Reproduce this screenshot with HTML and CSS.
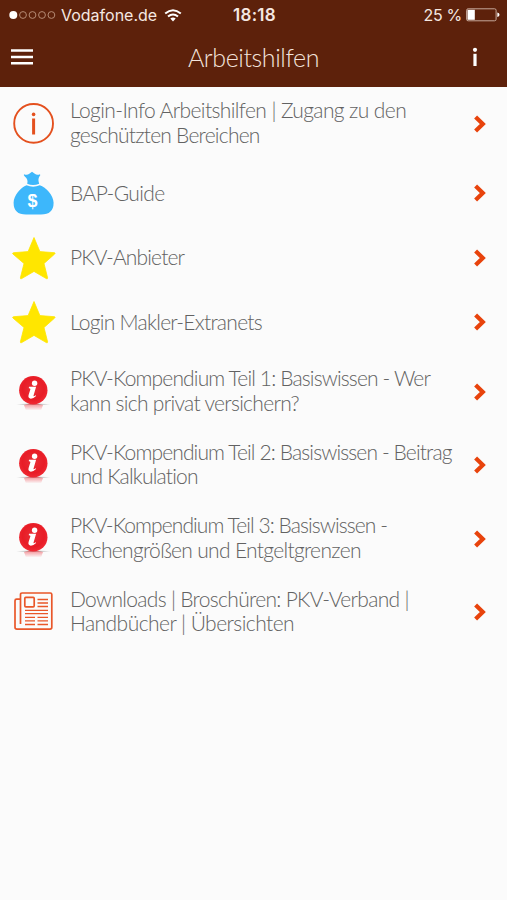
FILE: index.html
```html
<!DOCTYPE html>
<html lang="de">
<head>
<meta charset="utf-8">
<title>Arbeitshilfen</title>
<link rel="stylesheet" href="styles.css">
</head>
<body>
<svg class="defs" width="0" height="0" aria-hidden="true">
  <defs>
    <radialGradient id="ball" cx="50%" cy="45%" r="55%"><stop offset="0" stop-color="#e83038"/><stop offset=".7" stop-color="#e81c26"/><stop offset="1" stop-color="#f02a34"/></radialGradient>
    <linearGradient id="reflect" x1="0" y1="0" x2="0" y2="1"><stop offset="0" stop-color="#f05058" stop-opacity=".65"/><stop offset="1" stop-color="#f05058" stop-opacity="0"/></linearGradient>
    <radialGradient id="floor"><stop offset="0" stop-color="#777"/><stop offset="1" stop-color="#999" stop-opacity="0"/></radialGradient>
    <symbol id="star" viewBox="0 0 44 44"><path d="M22 1.5 27.9 15.6 42.5 16.7Q43.7 17 42.7 18L32 27.5 35.6 41.8Q35.6 43.3 34.3 42.6L22 35.4 9.7 42.6Q8.2 43.3 8.4 41.8L12 27.5.9 18Q.2 17 1.5 16.7L16.1 15.6Z" fill="#ffe600" stroke="#ffe600" stroke-width=".8" stroke-linejoin="round"/></symbol>
    <symbol id="redinfo" viewBox="0 -3 44 44">
      <ellipse cx="21.4" cy="31.2" rx="18" ry="1" fill="url(#floor)"/>
      <path d="M12 32Q21.4 29 31 32L29 37.5H14Z" fill="url(#reflect)"/>
      <circle cx="21.3" cy="17.2" r="14.2" fill="url(#ball)"/>
      <circle cx="22.6" cy="10.2" r="2.7" fill="#fff"/>
      <path d="M17 13.8H24.1L21.5 22.7Q21.2 23.8 23.8 22.2L24.1 23Q21 26 18.2 25.6 15.8 24.9 16.6 22L18.4 16.2Q18.5 15.2 16.8 15.2Z" fill="#fff"/>
    </symbol>
    <symbol id="chevron" viewBox="0 0 12 18"><path d="M1.6 2 8.8 9 1.6 16" fill="none" stroke="#e8430c" stroke-width="4.2"/></symbol>
  </defs>
</svg>
<header class="header">
  <div class="status">
    <div class="carrier">
      <svg width="47" height="10" viewBox="0 0 47 10"><circle cx="4.3" cy="5" r="4" fill="#fff"/><g fill="none" stroke="#b58a74" stroke-width="1"><circle cx="14" cy="5" r="3.4"/><circle cx="23.5" cy="5" r="3.4"/><circle cx="33" cy="5" r="3.4"/><circle cx="42.4" cy="5" r="3.4"/></g></svg>
      <span class="operator">Vodafone.de</span>
      <svg class="wifi" width="18" height="13" viewBox="0 0 18 13"><g fill="none" stroke="#fff" stroke-width="2"><path d="M1.2 4.6Q9-2.2 16.8 4.6"/><path d="M4 7.6Q9 3.3 14 7.6"/></g><path d="M6.3 9.6Q9 7.5 11.7 9.6L9 12.4Z" fill="#fff"/></svg>
    </div>
    <span class="time">18:18</span>
    <div class="power">
      <span class="percent">25 %</span>
      <svg width="34" height="14" viewBox="0 0 34 14"><rect x=".6" y=".8" width="29.5" height="12" rx="1.5" fill="none" stroke="#c6a89a"/><rect x="1.5" y="1.8" width="7.3" height="10" fill="#fff"/><path d="M31.3 4.5Q33.5 5 33.5 6.8T31.3 9Z" fill="#fff"/></svg>
    </div>
  </div>
  <nav class="nav">
    <svg width="22" height="16" viewBox="0 0 22 16"><path d="M0 1.5H22M0 8H22M0 14.2H22" stroke="#fff" stroke-width="2.4"/></svg>
    <h1 class="title">Arbeitshilfen</h1>
    <svg class="about" width="6" height="20" viewBox="0 0 6 20"><circle cx="3" cy="2.8" r="2.1" fill="#fff"/><path d="M3 6.8V19" stroke="#fff" stroke-width="3.2"/></svg>
  </nav>
</header>
<main class="list">
  <a class="row">
    <svg class="icon" viewBox="0 0 44 44"><circle cx="21.6" cy="21.4" r="19.4" fill="none" stroke="#e4501e" stroke-width="1.9"/><circle cx="21.6" cy="12.4" r="1.8" fill="#e4501e"/><path d="M21.6 16.5V32.5" stroke="#e4501e" stroke-width="3"/></svg>
    <div class="label"><span class="l1">Login-Info Arbeitshilfen | Zugang zu den</span><span class="l2">geschützten Bereichen</span></div>
    <svg class="chevron"><use href="#chevron"/></svg>
  </a>
  <a class="row single">
    <svg class="icon" viewBox="0 0 44 44"><g fill="#3db7fb"><path d="M12 3.2Q15 4.5 17.3 2.8L20 .8 22.8 2.8Q25 4.5 28 3.2 28.8 4 27.5 5.3 25.5 8.5 27.2 12.7 21 15.2 15.2 12.7 16.5 8.5 12.8 5.5 11.3 4.2 12 3.2Z"/><path d="M14.6 14.3Q21 17.2 27.8 14.3C34 16.5 41.6 24.3 41.6 31.8Q41.6 43.6 29 43.6H14Q1.6 43.6 1.6 31.8C1.6 24.3 9 16.5 14.6 14.3Z"/></g><text class="dollar" x="20.6" y="35.5">$</text></svg>
    <div class="label"><span class="l3">BAP-Guide</span></div>
    <svg class="chevron"><use href="#chevron"/></svg>
  </a>
  <a class="row single">
    <svg class="icon"><use href="#star"/></svg>
    <div class="label"><span class="l4">PKV-Anbieter</span></div>
    <svg class="chevron"><use href="#chevron"/></svg>
  </a>
  <a class="row single">
    <svg class="icon"><use href="#star"/></svg>
    <div class="label"><span class="l5">Login Makler-Extranets</span></div>
    <svg class="chevron"><use href="#chevron"/></svg>
  </a>
  <a class="row">
    <svg class="icon"><use href="#redinfo"/></svg>
    <div class="label"><span class="l6">PKV-Kompendium Teil 1: Basiswissen - Wer</span><span class="l7">kann sich privat versichern?</span></div>
    <svg class="chevron"><use href="#chevron"/></svg>
  </a>
  <a class="row">
    <svg class="icon"><use href="#redinfo"/></svg>
    <div class="label"><span class="l8">PKV-Kompendium Teil 2: Basiswissen - Beitrag</span><span class="l9">und Kalkulation</span></div>
    <svg class="chevron"><use href="#chevron"/></svg>
  </a>
  <a class="row">
    <svg class="icon"><use href="#redinfo"/></svg>
    <div class="label"><span class="l10">PKV-Kompendium Teil 3: Basiswissen -</span><span class="l11">Rechengrößen und Entgeltgrenzen</span></div>
    <svg class="chevron"><use href="#chevron"/></svg>
  </a>
  <a class="row">
    <svg class="icon" viewBox="0 0 44 44"><g fill="none" stroke="#e9572a" stroke-width="1.7"><path d="M8.5 34V4.6Q8.5 3 10 3H38.3Q39.8 3 39.8 4.6V37.2Q39.8 39.1 38 39.1H5Q3 39.1 3 37.2V10.8Q3 9.2 4.6 9.2H8.5"/><rect x="12.8" y="7.4" width="9.4" height="9.4" rx="1"/><path d="M25.5 9.5H36M25.5 13H36M25.5 16.5H36M13 20.3H36M13 23.6H36" stroke-width="1.3"/><path d="M13 27.3H23M25.5 27.3H36M13 30.8H23M25.5 30.8H36M13 34.5H23M25.5 34.5H36" stroke-width="1.3"/></g></svg>
    <div class="label"><span class="l12">Downloads | Broschüren: PKV-Verband |</span><span class="l13">Handbücher | Übersichten</span></div>
    <svg class="chevron"><use href="#chevron"/></svg>
  </a>
</main>
</body>
</html>
```
FILE: styles.css
```css
* { box-sizing: border-box; }
body { margin: 0; min-height: 900px; background: #fbfbfb; font-family: Lato, "Open Sans", sans-serif; }
.defs { display: block; height: 0; }
.header { height: 87px; background: #5d210b; color: #fff; }
.status { height: 30px; display: grid; grid-template-columns: 1fr auto 1fr; align-items: center; padding: 0 7px 0 9px; font: 16px/30px Inter, sans-serif; color: #f5e8e2; }
.carrier, .power { display: flex; align-items: center; }
.operator { margin-left: 5px; }
.wifi { margin-left: 7px; }
.time { font-size: 17px; font-weight: 600; letter-spacing: .3px; }
.percent { letter-spacing: -.3px; }
.power { justify-content: flex-end; gap: 4px; }
.nav { height: 57px; display: grid; grid-template-columns: 1fr auto 1fr; align-items: center; padding: 0 11px 3px; }
.title { margin: 0; font-size: 25px; font-weight: 300; line-height: 32px; letter-spacing: -.4px; color: #f3e3db; }
.about { justify-self: end; margin-right: 18px; }
.row { display: flex; align-items: center; height: 73.5px; padding: 0 21px 0 12px; }
.single { height: 64.8px; }
.icon { width: 44px; height: 44px; flex: none; }
.label { flex: 1; min-width: 0; margin-left: 14px; padding-bottom: 2px; color: #626262; font-size: 21px; font-weight: 300; line-height: 24.5px; white-space: nowrap; }
.single .label { padding-bottom: 0; }
.label span { display: block; }
.chevron { width: 12px; height: 18px; flex: none; }
.dollar { font: bold 18px "Liberation Sans", sans-serif; fill: #fff; text-anchor: middle; }
.l1 { letter-spacing: -.6px; }
.l2 { letter-spacing: -.77px; }
.l3 { letter-spacing: -.58px; }
.l4 { letter-spacing: -.85px; }
.l5 { letter-spacing: -.73px; }
.l6 { letter-spacing: -.85px; }
.l7 { letter-spacing: -.69px; }
.l8 { letter-spacing: -.87px; }
.l9 { letter-spacing: -.8px; }
.l10 { letter-spacing: -.92px; }
.l11 { letter-spacing: -.68px; }
.l12 { letter-spacing: -.68px; }
.l13 { letter-spacing: -.54px; }
```
